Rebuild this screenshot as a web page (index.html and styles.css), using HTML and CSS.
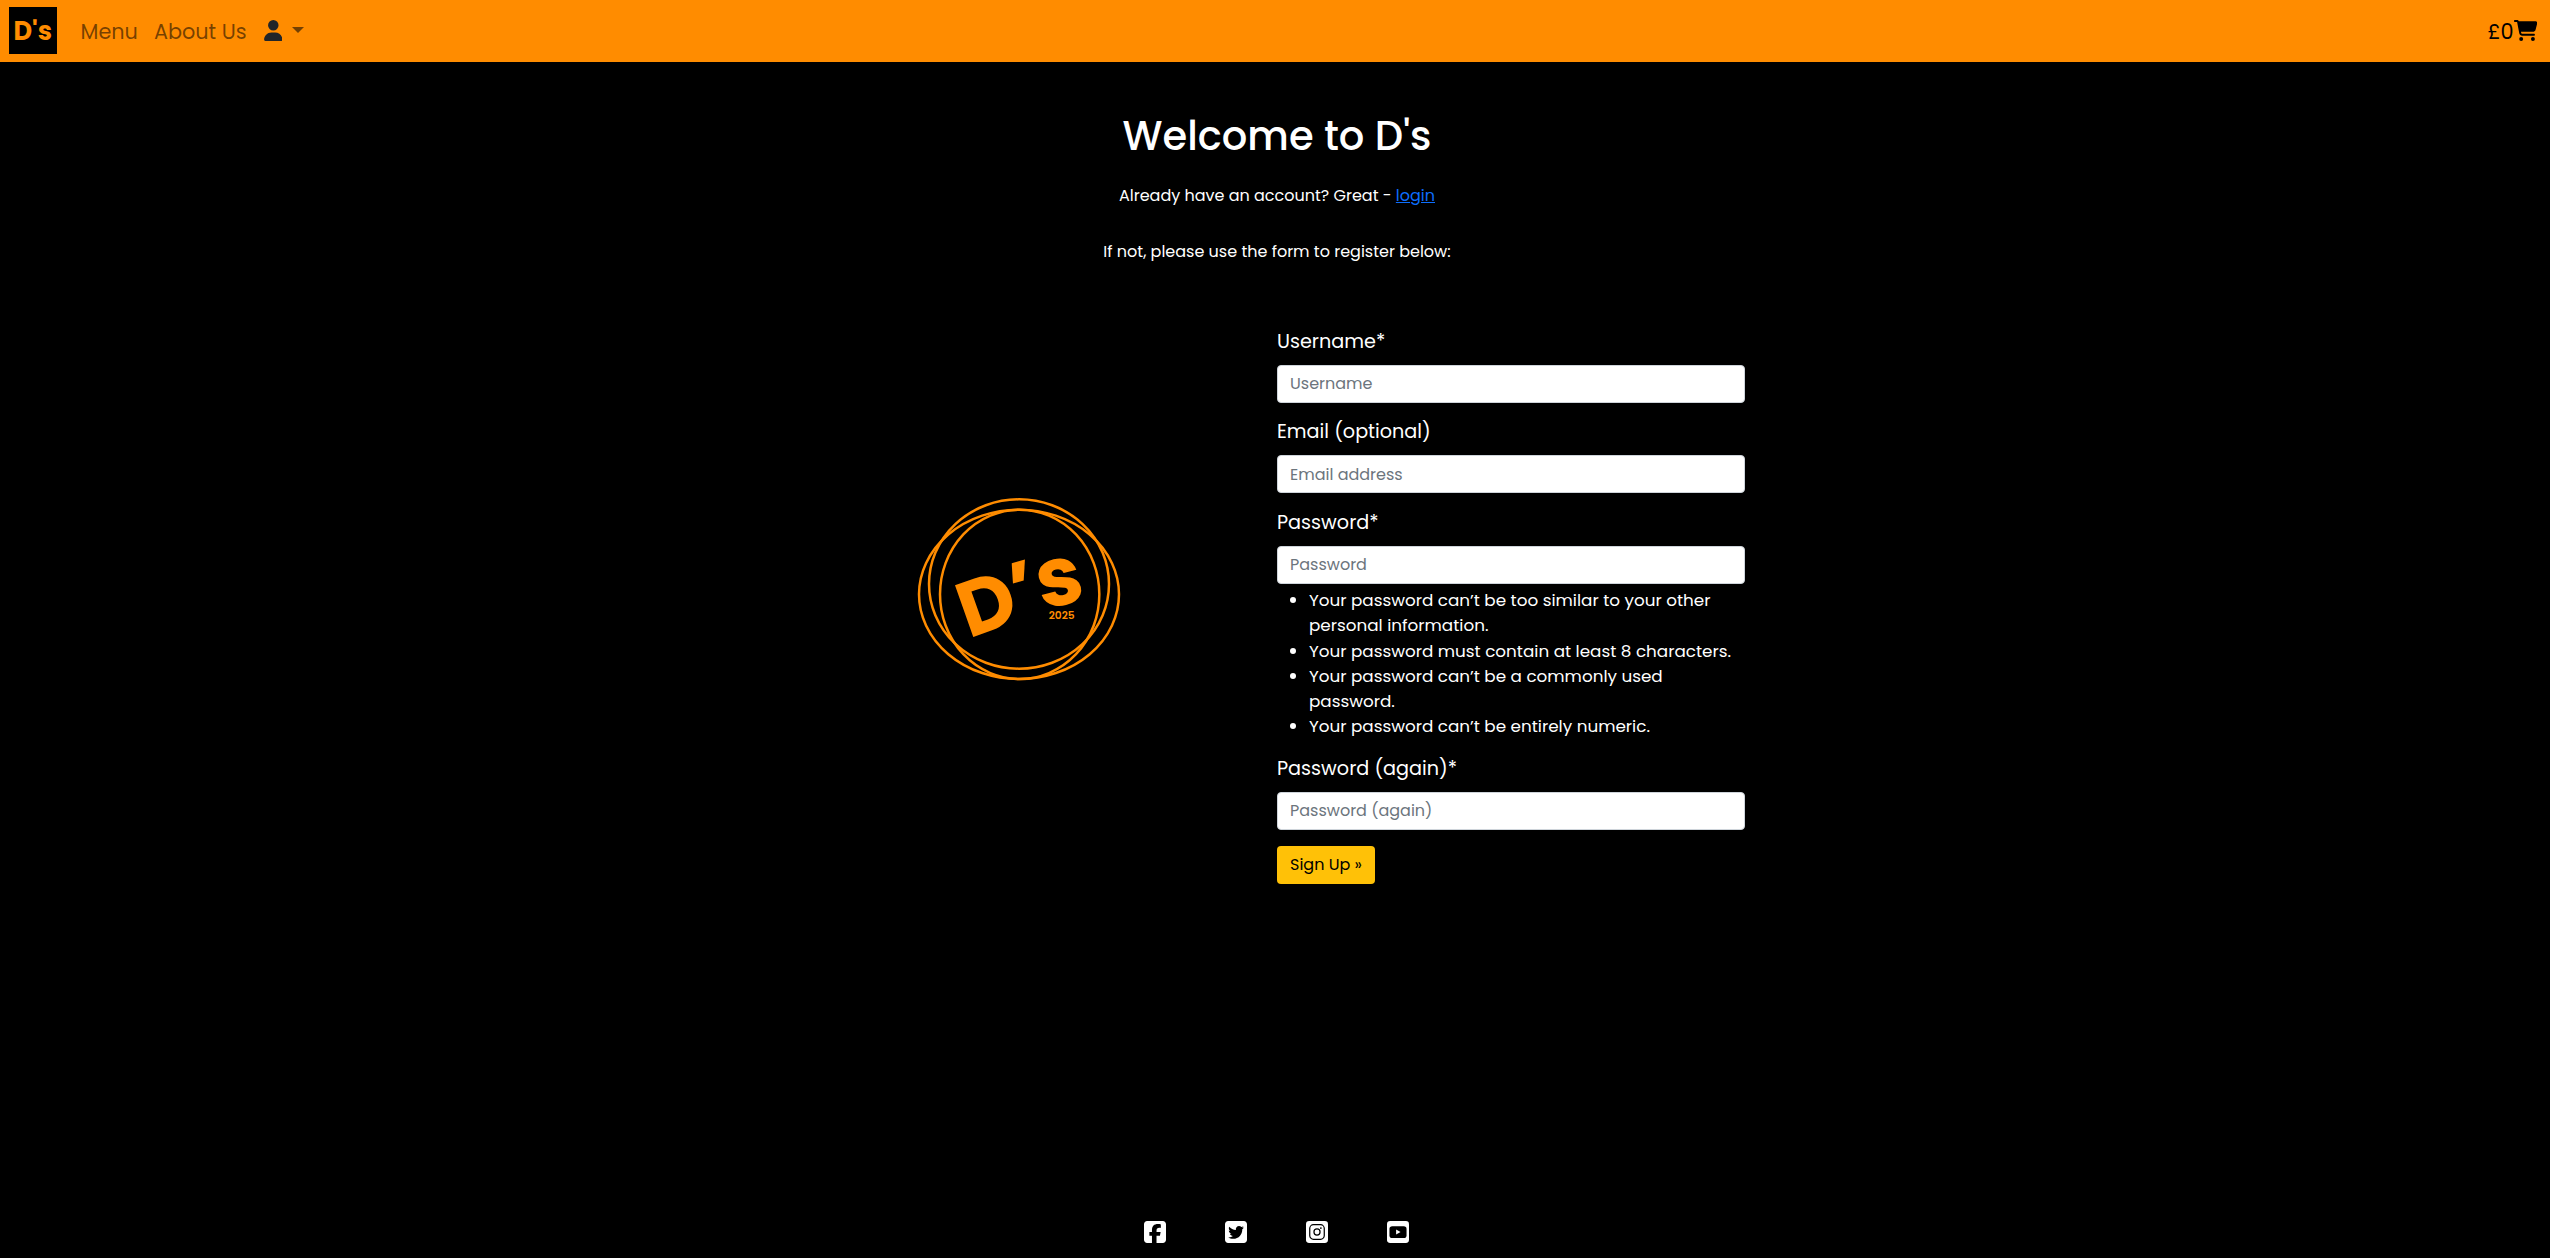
FILE: index.html
```html
<!DOCTYPE html>
<html lang="en">
<head>
<meta charset="utf-8">
<title>D's - Sign Up</title>
<link rel="stylesheet" href="styles.css">
</head>
<body>
<header class="navbar">
  <a class="brand">D's</a>
  <nav class="links">
    <a class="link">Menu</a>
    <a class="link">About Us</a>
    <a class="account">
      <svg class="user" viewBox="0 0 448 512"><path d="M224 256a128 128 0 1 0 0-256 128 128 0 1 0 0 256zm-45.700 48C79.800 304 0 383.800 0 482.300 0 498.700 13.300 512 29.700 512h388.600c16.400 0 29.700-13.300 29.700-29.700C448 383.800 368.200 304 269.700 304z"/></svg>
      <span class="caret"></span>
    </a>
  </nav>
  <a class="cart"><span>£0</span>
    <svg class="basket" viewBox="0 0 576 512"><path d="M0 24C0 10.700 10.700 0 24 0h45.500c22 0 41.500 12.800 50.600 32h411c26.300 0 45.500 25 38.600 50.400l-41 152.300c-8.500 31.400-37 53.300-69.500 53.300H170.700l5.400 28.500c2.200 11.300 12.100 19.500 23.600 19.500H488c13.300 0 24 10.700 24 24s-10.700 24-24 24H199.700c-34.600 0-64.300-24.600-70.700-58.500L77.400 54.500c-.7-3.800-4-6.500-7.900-6.500H24C10.700 48 0 37.300 0 24zm128 440a48 48 0 1 1 96 0 48 48 0 1 1-96 0zm336-48a48 48 0 1 1 0 96 48 48 0 1 1 0-96z"/></svg>
  </a>
</header>
<main>
  <section class="intro">
    <h1>Welcome to D's</h1>
    <p class="have">Already have an account? Great - <a class="login">login</a></p>
    <p class="below">If not, please use the form to register below:</p>
  </section>
  <section class="signup">
    <div class="art">
      <svg class="logo" viewBox="0 0 720 660">
        <g fill="none" stroke="#ff8c00" stroke-width="7.500">
          <ellipse cx="357" cy="312" rx="270" ry="254"/>
          <ellipse cx="359" cy="343" rx="239" ry="254"/>
          <ellipse cx="357" cy="343" rx="300" ry="254"/>
        </g>
        <g class="mark">
          <text transform="translate(221 470) rotate(-19.500)" font-size="234" x="-16">D</text>
          <text transform="translate(324 477) skewY(-16)" font-size="280">'</text>
          <text transform="translate(434 389) rotate(-14)" font-size="248" x="-6">s</text>
          <text class="year" x="446" y="417" font-size="33" textLength="78" lengthAdjust="spacingAndGlyphs">2025</text>
        </g>
      </svg>
    </div>
    <form class="form">
      <label>Username*</label>
      <input type="text" placeholder="Username">
      <label>Email (optional)</label>
      <input type="text" placeholder="Email address">
      <label>Password*</label>
      <input type="password" placeholder="Password">
      <ul>
        <li>Your password can’t be too similar to your other personal information.</li>
        <li>Your password must contain at least 8 characters.</li>
        <li>Your password can’t be a commonly used password.</li>
        <li>Your password can’t be entirely numeric.</li>
      </ul>
      <label>Password (again)*</label>
      <input type="password" placeholder="Password (again)">
      <button type="button">Sign Up »</button>
    </form>
  </section>
</main>
<footer>
  <svg viewBox="0 32 448 448"><path fill="#fff" d="M64 32C28.700 32 0 60.700 0 96v320c0 35.300 28.700 64 64 64h98.200V334.200h-52.800V256h52.800v-33.700c0-87.100 39.400-127.500 125-127.500 16.200 0 44.200 3.200 55.700 6.400V172c-6-.6-16.500-1-29.600-1-42 0-58.200 15.900-58.200 57.200V256h83.600l-14.400 78.200h-69.300V480H384c35.300 0 64-28.700 64-64V96c0-35.300-28.700-64-64-64z"/></svg>
  <svg viewBox="0 32 448 448"><path fill="#fff" d="M64 32C28.700 32 0 60.700 0 96v320c0 35.300 28.700 64 64 64h320c35.300 0 64-28.700 64-64V96c0-35.300-28.700-64-64-64zm287.300 168.500c.2 2.800.2 5.700.2 8.500 0 86.700-66 186.600-186.600 186.600-37.200 0-71.700-10.800-100.700-29.400 5.300.6 10.400.8 15.800.8 30.700 0 58.900-10.400 81.400-28-28.800-.6-53-19.500-61.300-45.500 10.100 1.500 19.200 1.500 29.600-1.200-30-6.100-52.500-32.500-52.500-64.400v-.8c8.700 4.900 18.900 7.900 29.600 8.300a65.400 65.400 0 0 1-29.200-54.600c0-12.200 3.200-23.400 8.900-33.100 32.300 39.800 80.800 65.800 135.200 68.600-9.300-44.500 24-80.600 64-80.600 18.900 0 35.900 7.900 47.900 20.700 14.800-2.800 29-8.300 41.600-15.800-4.900 15.200-15.200 28-28.800 36.100 13.200-1.400 26-5.100 37.800-10.200-8.900 13.100-20.100 24.700-32.900 34z"/></svg>
  <svg viewBox="0 32 448 448"><rect y="32" width="448" height="448" rx="64" fill="#fff"/><g fill="none" stroke="#000" stroke-width="25"><rect x="76" y="108" width="296" height="296" rx="76"/><circle cx="224" cy="256" r="62"/></g><circle cx="303" cy="177" r="18"/></svg>
  <svg viewBox="0 32 448 448"><rect y="32" width="448" height="448" rx="64" fill="#fff"/><rect x="50" y="138" width="348" height="240" rx="58"/><path fill="#fff" d="M186 205v103l90-51z"/></svg>
</footer>
</body>
</html>
```
FILE: styles.css
```css
* { box-sizing: border-box; }

body {
  margin: 0;
  min-height: 1258px;
  display: flex;
  flex-direction: column;
  background: #000;
  color: #fff;
  font-family: Poppins, Inter, sans-serif;
  font-size: 16px;
}

h1, p, ul { margin: 0; }

.navbar {
  height: 62px;
  flex: none;
  display: flex;
  align-items: center;
  padding: 0 13px 0 9px;
  background: #ff8c00;
}
.brand {
  width: 48px;
  height: 47px;
  margin-bottom: 1px;
  padding-left: 4.500px;
  background: #000;
  color: #ff8c00;
  font-weight: 700;
  font-size: 25.6px;
  line-height: 48px;
}
.links {
  display: flex;
  align-items: center;
  flex: 1;
  gap: 16px;
  margin-left: 23.500px;
}
.link {
  font-size: 20.8px;
  line-height: 31px;
  color: rgba(0, 0, 0, .55);
}
.account { display: flex; align-items: center; gap: 10px; padding-left: 1px; }
.user { width: 18.6px; height: 21px; margin-top: -1px; fill: #212529; }
.caret {
  margin-top: -2px;
  border: 6px solid transparent;
  border-top-color: #734003;
  border-bottom: 0;
}
.cart { display: flex; align-items: center; color: #000; font-size: 20.8px; }
.basket { width: 23.5px; height: 21px; margin-top: -1px; }

.intro { padding: 50px 0 0 4px; text-align: center; }
h1 { font-weight: 500; font-size: 40px; line-height: 48px; }
p { line-height: 24px; }
.have { margin-top: 24px; }
.login { color: #0d6efd; text-decoration: underline; }
.below { margin-top: 32px; }

.signup {
  width: 940px;
  margin: 63.75px auto 0;
  display: grid;
  grid-template-columns: 472px 468px;
}
.art {
  display: flex;
  justify-content: center;
  align-items: flex-start;
  padding: 152.25px 42px 0 0;
}
.logo { width: 240px; height: 220px; }
.mark { fill: #ff8c00; font-weight: 700; }
.year { font-weight: 600; }

.form { display: flex; flex-direction: column; align-items: flex-start; }
label { font-size: 19.2px; line-height: 28.8px; margin-bottom: 8.2px; }
input {
  width: 100%;
  height: 38px;
  margin: 0 0 15.5px;
  padding: 6px 12px;
  border: 1px solid #ced4da;
  border-radius: 4px;
  background: #fff;
  font: inherit;
}
input::placeholder { color: #6c757d; opacity: 1; }
ul {
  margin: -11px 0 15.5px;
  padding-left: 32px;
  font-size: 16.8px;
  line-height: 25.2px;
}
button {
  width: 98px;
  height: 38px;
  margin-top: .5px;
  padding: 0;
  border: 0;
  border-radius: 4px;
  background: #ffc107;
  color: #000;
  font: inherit;
}

footer {
  margin-top: auto;
  padding: 0 0 15px 3px;
  display: flex;
  justify-content: center;
  gap: 59px;
}
footer svg { width: 22px; height: 22px; }
```
